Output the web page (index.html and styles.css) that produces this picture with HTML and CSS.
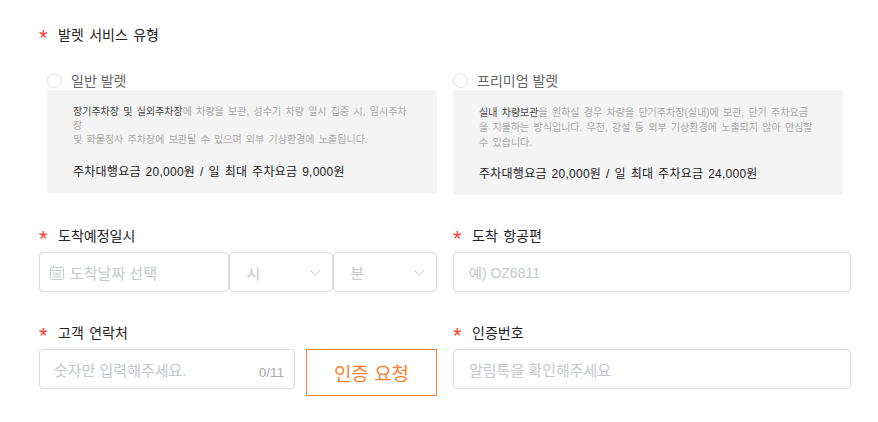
FILE: index.html
```html
<!DOCTYPE html>
<html lang="ko">
<head>
    <meta charset="UTF-8">
    <meta name="viewport" content="width=device-width, initial-scale=1.0">
    <title>발렛 서비스 예약</title>
    <link rel="stylesheet" href="styles.css">
</head>
<body>
    <form class="form">
        <div class="label service-label"><span class="star">*</span>발렛 서비스 유형</div>

        <div class="row service-row">
            <div class="option">
                <label class="radio-line"><span class="radio"></span>일반 발렛</label>
                <div class="desc-box">
                    <p class="desc"><b>장기주차장 및 실외주차장</b>에 차량을 보관, 성수기 차량 일시 집중 시, 임시주차장<br>및 화물청사 주차장에 보관될 수 있으며 외부 기상환경에 노출됩니다.</p>
                    <p class="price">주차대행요금 20,000원 / 일 최대 주차요금 9,000원</p>
                </div>
            </div>
            <div class="option">
                <label class="radio-line"><span class="radio"></span>프리미엄 발렛</label>
                <div class="desc-box">
                    <p class="desc desc-wide"><b>실내 차량보관</b>을 원하실 경우 차량을 단기주차장(실내)에 보관, 단기 주차요금을 지불하는 방식입니다. 우천, 강설 등 외부 기상환경에 노출되지 않아 안심할 수 있습니다.</p>
                    <p class="price">주차대행요금 20,000원 / 일 최대 주차요금 24,000원</p>
                </div>
            </div>
        </div>

        <div class="row field-row">
            <div class="field">
                <div class="label"><span class="star">*</span>도착예정일시</div>
                <div class="date-line">
                    <div class="box date-box">
                        <svg class="cal" viewBox="0 0 14 15" width="14" height="15" fill="none" stroke="#c9ccd3" stroke-width="1">
                            <rect x="0.5" y="2.500" width="13" height="12" rx="1"/>
                            <path d="M0.500 5.500h13M3.500 0.500v2M10.500 0.500v2M3 8h8M3 10h8M3 12h8"/>
                        </svg>
                        <span class="hint">도착날짜 선택</span>
                    </div>
                    <div class="box select-box">
                        <span class="hint">시</span>
                        <svg class="arrow" viewBox="0 0 12 7" width="12" height="7" fill="none" stroke="#c9ccd3" stroke-width="1"><path d="M1 1l5 5 5-5"/></svg>
                    </div>
                    <div class="box select-box">
                        <span class="hint">분</span>
                        <svg class="arrow" viewBox="0 0 12 7" width="12" height="7" fill="none" stroke="#c9ccd3" stroke-width="1"><path d="M1 1l5 5 5-5"/></svg>
                    </div>
                </div>
            </div>
            <div class="field">
                <div class="label"><span class="star">*</span>도착 항공편</div>
                <div class="box text-box"><span class="hint hint-latin">예) OZ6811</span></div>
            </div>
        </div>

        <div class="row field-row">
            <div class="field">
                <div class="label"><span class="star">*</span>고객 연락처</div>
                <div class="phone-line">
                    <div class="box phone-box">
                        <span class="hint">숫자만 입력해주세요.</span>
                        <span class="count">0/11</span>
                    </div>
                    <button type="button" class="auth-btn">인증 요청</button>
                </div>
            </div>
            <div class="field">
                <div class="label"><span class="star">*</span>인증번호</div>
                <div class="box text-box"><span class="hint">알림톡을 확인해주세요</span></div>
            </div>
        </div>
    </form>
</body>
</html>
```

FILE: styles.css
```css
* {
    margin: 0;
    padding: 0;
    box-sizing: border-box;
}

body {
    font-family: 'Liberation Sans', 'Noto Sans CJK KR', sans-serif;
    background: white;
    color: #222;
}

.form {
    width: 812px;
    margin-left: 39px;
    padding-top: 26px;
}

.row {
    display: flex;
    gap: 16px;
}

.label {
    display: flex;
    font-size: 14px;
    line-height: 18px;
    height: 18px;
    word-spacing: 1.5px;
    color: #222;
}

.star {
    width: 19px;
    height: 18px;
    color: #ff3b30;
    font-size: 22px;
    line-height: 24px;
}

.service-row {
    margin-top: 26px;
}

.option {
    width: 398px;
    padding-left: 8px;
}

.option:last-child {
    padding-left: 0;
}

.radio-line {
    display: flex;
    align-items: center;
    height: 20px;
    font-size: 14px;
    color: #666;
}

.radio {
    width: 15px;
    height: 15px;
    margin-right: 9px;
    border: 1px solid #dfe1e8;
    border-radius: 50%;
    background: white;
}

.desc-box {
    width: 390px;
    background: #f4f4f4;
    padding: 15px 26px 13px;
}

.desc {
    height: 59px;
    font-size: 10px;
    line-height: 14px;
    word-spacing: 1.5px;
    color: #aaa;
}

.desc-wide {
    height: 61px;
    line-height: 15px;
}

.desc b {
    font-weight: normal;
    color: #444;
}

.price {
    font-size: 12px;
    line-height: 16px;
    letter-spacing: 0.25px;
    word-spacing: 1.300px;
    color: #222;
}

.field-row {
    margin-top: 32px;
}

.field {
    width: 398px;
}

.field .label {
    margin-bottom: 7px;
}

.date-line {
    display: flex;
}

.box {
    display: flex;
    align-items: center;
    height: 40px;
    border: 1px solid #d9dbe3;
    border-radius: 4px;
    background: white;
}

.hint {
    font-size: 15px;
    color: #c3c7cf;
}

.hint-latin {
    font-size: 14px;
}

.date-box {
    width: 191px;
    padding-left: 10px;
}

.cal {
    margin-right: 6px;
}

.select-box {
    width: 104px;
    justify-content: space-between;
    padding: 0 11px 0 16px;
}

.text-box {
    padding-left: 15px;
}

.phone-line {
    display: flex;
    gap: 11px;
    align-items: flex-start;
}

.phone-box {
    position: relative;
    width: 256px;
    padding-left: 14px;
}

.count {
    position: absolute;
    right: 10px;
    bottom: 8px;
    font-size: 13.500px;
    color: #aaa;
}

.auth-btn {
    width: 131px;
    height: 47px;
    border: 1px solid #fa8231;
    background: white;
    color: #fa8231;
    font-family: inherit;
    font-size: 19px;
}
```
